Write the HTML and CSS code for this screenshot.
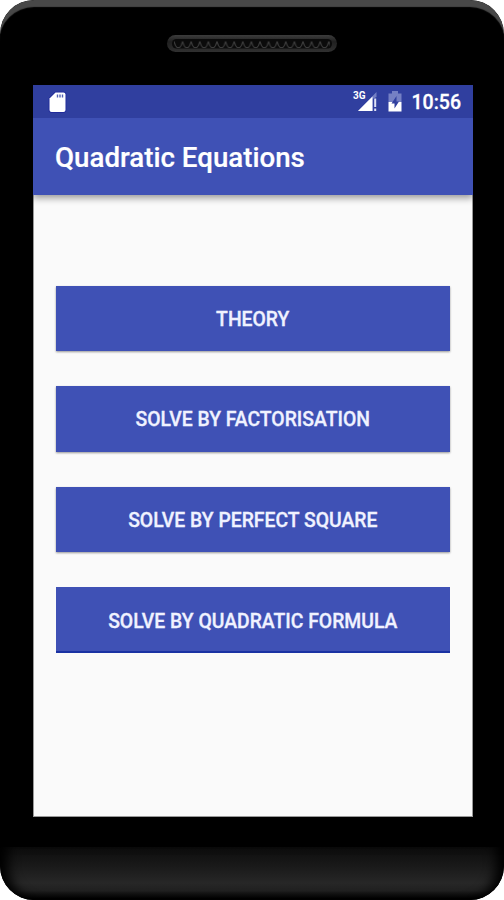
FILE: index.html
```html
<!DOCTYPE html>
<html lang="en">
<head>
  <meta charset="UTF-8">
  <title>Quadratic Equations</title>
  <link rel="stylesheet" href="styles.css">
</head>
<body>
  <div class="phone">
    <div class="top-bezel">
      <svg class="speaker" width="172" height="20" viewBox="0 0 172 20">
        <defs>
          <linearGradient id="rim" x1="0" y1="0" x2="0" y2="1">
            <stop offset="0" stop-color="#3c3c3c"/>
            <stop offset="0.4" stop-color="#202020"/>
            <stop offset="1" stop-color="#303030"/>
          </linearGradient>
          <pattern id="holes" x="8" y="7" width="8.6" height="9" patternUnits="userSpaceOnUse">
            <path d="M0 1.5L1.4 5.5L3 7.5H5.6L7.2 5.5L8.6 1.5" fill="none" stroke="#3c3c3c" stroke-width="1.1"/>
          </pattern>
        </defs>
        <rect x="1" y="2" width="170" height="17" rx="8.5" fill="url(#rim)"/>
        <rect x="6" y="6" width="160" height="9.5" rx="4.5" fill="#0b0b0b"/>
        <rect x="8" y="7" width="156" height="9" fill="url(#holes)"/>
      </svg>
    </div>

    <div class="screen">
      <div class="status-bar">
        <svg class="sd-card" width="20" height="24" viewBox="0 0 20 24">
          <path d="M7.5 2.5H15.5Q17.5 2.5 17.5 4.5V20Q17.5 22 15.5 22H3.5Q1.5 22 1.5 20V8.5Z" fill="#fff" stroke="#1c2699" stroke-width="1.6" paint-order="stroke"/>
          <path d="M9.5 4.5V7.5M12 4.5V7.5M14.5 4.5V7.5" stroke="#5361b5" stroke-width="1.4"/>
        </svg>
        <div class="status-icons">
          <span class="network">3G</span>
          <svg class="signal" width="20" height="20" viewBox="0 0 20 20">
            <path d="M0 19L18.5 0V5L14.5 7V19Z" fill="#7580c4"/>
            <path d="M0 19L14.5 4.5V19Z" fill="#fff"/>
            <path d="M17.2 6.5V15M17.2 16.5V19" stroke="#dfe2f5" stroke-width="2"/>
          </svg>
          <svg class="battery" width="14" height="21" viewBox="0 0 14 21">
            <path d="M4 0H10V2.5H13.5V11H.5V2.5H4Z" fill="#7580c4"/>
            <path d="M.5 11H13.5V20.5H.5Z" fill="#fff"/>
            <path d="M8.5 5L3.5 12.5H6.5V17.5L11 10.5H8.5Z" fill="#303f9f"/>
          </svg>
          <span class="clock">10:56</span>
        </div>
      </div>

      <header class="app-bar">
        <h1>Quadratic Equations</h1>
      </header>

      <main class="menu">
        <button class="btn">THEORY</button>
        <button class="btn">SOLVE BY FACTORISATION</button>
        <button class="btn">SOLVE BY PERFECT SQUARE</button>
        <button class="btn btn-last">SOLVE BY QUADRATIC FORMULA</button>
      </main>
    </div>

    <div class="chin"></div>
  </div>
</body>
</html>
```

FILE: styles.css
```css
body {
  margin: 0;
  background: #fff;
  font-family: Roboto, "Liberation Sans", sans-serif;
}

/* device frame */
.phone {
  display: flex;
  flex-direction: column;
  width: 504px;
  height: 900px;
  overflow: hidden;
  background: #000;
  border-radius: 34px;
}

.top-bezel {
  box-sizing: border-box;
  flex: none;
  height: 85px;
  padding-top: 33px;
  text-align: center;
  border-radius: 34px 34px 0 0;
  box-shadow: inset 0 8px 1px -1px #484848;
}

.speaker {
  display: block;
  margin: 0 auto;
}

.chin {
  flex: none;
  height: 53px;
  margin-top: 30px;
  border-radius: 0 0 34px 34px;
  background: linear-gradient(#0d0d0d, #191919 35%, #272727 68%, #202020 82%, #000 98%);
  box-shadow: inset 14px 0 12px -6px #000, inset -14px 0 12px -6px #000;
}

/* app */
.screen {
  box-sizing: border-box;
  flex: none;
  width: 440px;
  height: 732px;
  margin-left: 33px;
  background: #fafafa;
  box-shadow: inset 0 0 0 1px #999;
}

.status-bar {
  display: flex;
  align-items: center;
  justify-content: space-between;
  height: 33px;
  padding: 0 12px 0 15px;
  background: #303f9f;
  color: #fff;
}

.status-icons {
  display: flex;
  align-items: center;
}

.network {
  margin: -11px -8px 0 0;
  font-size: 10px;
  font-weight: 700;
  line-height: 10px;
}

.battery {
  margin: 0 10px;
}

.clock {
  padding-top: 2px;
  font-size: 19.5px;
  font-weight: 500;
  line-height: 31px;
  -webkit-text-stroke: 0.3px;
}

.app-bar {
  box-sizing: border-box;
  display: flex;
  align-items: center;
  height: 76.5px;
  padding: 2px 0 0 22px;
  background: #3f51b5;
  box-shadow: 0 3px 7px rgba(0, 0, 0, 0.4);
  clip-path: inset(0 0 -14px 0);
}

.app-bar h1 {
  margin: 0;
  color: #fff;
  font-size: 27.7px;
  font-weight: 500;
  -webkit-text-stroke: 0.2px;
}

.menu {
  display: flex;
  flex-direction: column;
  gap: 35px;
  padding: 91px 23px 0 22.5px;
}

.btn {
  height: 65.6px;
  padding: 2px 0 0;
  border: 0;
  background: #3f51b5;
  box-shadow: 0 1px 2px rgba(0, 0, 0, 0.4);
  color: #f0f2ff;
  font-family: inherit;
  font-size: 19.35px;
  font-weight: 500;
  -webkit-text-stroke: 0.3px;
}

.btn-last {
  box-shadow: inset 0 -2px 0 #1a32a3;
}
```
